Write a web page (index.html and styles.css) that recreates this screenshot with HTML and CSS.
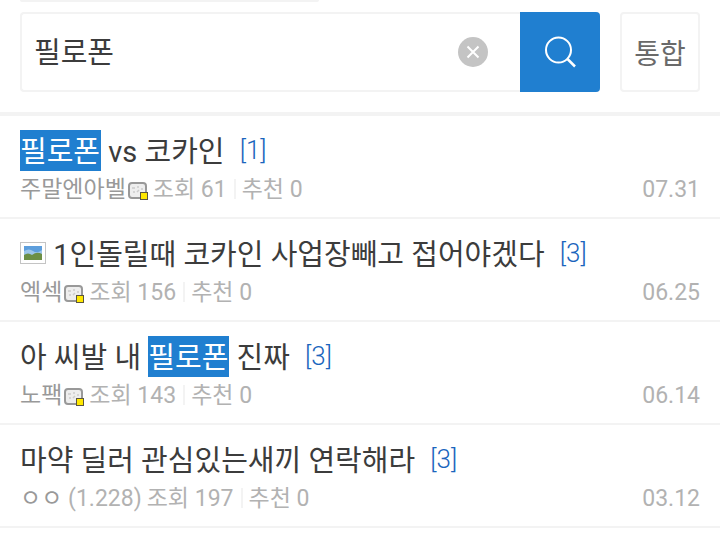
FILE: index.html
```html
<!DOCTYPE html>
<html lang="ko">
<head>
    <meta charset="UTF-8">
    <meta name="viewport" content="width=device-width, initial-scale=1.0">
    <title>필로폰</title>
    <link rel="stylesheet" href="styles.css">
</head>
<body>
    <!-- Shared icons -->
    <svg class="sprite" aria-hidden="true">
        <symbol id="nick" viewBox="0 0 20 18">
            <rect x="1" y="1" width="17" height="15" rx="3" fill="#eeeeee" stroke="#999999" stroke-width="2"/>
            <path d="M4 6h3M9 5h2M13 7h2M5 10h2M9 10l2-2" stroke="#cccccc" stroke-width="1.5" fill="none"/>
            <rect x="12.5" y="10.5" width="7" height="7" fill="#ffe800" stroke="#5c5640"/>
        </symbol>
    </svg>

    <header class="top">
        <div class="tab"></div>
        <form class="search">
            <div class="search-box">
                <input type="text" class="search-input" aria-label="검색어" value="필로폰">
                <button type="reset" class="clear" aria-label="지우기">
                    <svg width="30" height="30" viewBox="0 0 30 30">
                        <circle cx="15" cy="15" r="15" fill="#c4c4c4"/>
                        <path d="M9.5 9.5l11 11M20.5 9.5l-11 11" stroke="#ffffff" stroke-width="2"/>
                    </svg>
                </button>
                <button type="submit" class="submit" aria-label="검색">
                    <svg width="32" height="32" viewBox="0 0 32 32" fill="none" stroke="#ffffff" stroke-width="2">
                        <circle cx="14.5" cy="14" r="12.5"/>
                        <path d="M23 22.5l8 8" stroke-width="2.5"/>
                    </svg>
                </button>
            </div>
            <button type="button" class="scope">통합</button>
        </form>
    </header>

    <!-- Post list -->
    <ul class="list">
        <li class="post">
            <a href="#" class="title"><mark>필로폰</mark> vs 코카인 <span class="count">[1]</span></a>
            <div class="meta">
                <span>주말엔아벨</span><svg class="nick"><use href="#nick"/></svg>
                <span class="views">조회 61</span>
                <span class="likes">추천 0</span>
                <time class="date">07.31</time>
            </div>
        </li>
        <li class="post">
            <a href="#" class="title">
                <svg class="photo" viewBox="0 0 26 22">
                    <rect x="0.5" y="0.5" width="25" height="21" fill="#ffffff" stroke="#c4c4c4"/>
                    <rect x="4" y="4" width="18" height="14" fill="#5d9edc"/>
                    <path d="M4 9q5-3 9 0t9-1v5H4z" fill="#9dc6ea"/>
                    <path d="M4 13q4-3 8 0q5-4 10-1v6H4z" fill="#6c8f45"/>
                </svg>
                1인돌릴때 코카인 사업장빼고 접어야겠다 <span class="count">[3]</span></a>
            <div class="meta">
                <span>엑섹</span><svg class="nick"><use href="#nick"/></svg>
                <span class="views">조회 156</span>
                <span class="likes">추천 0</span>
                <time class="date">06.25</time>
            </div>
        </li>
        <li class="post">
            <a href="#" class="title">아 씨발 내 <mark>필로폰</mark> 진짜 <span class="count">[3]</span></a>
            <div class="meta">
                <span>노팩</span><svg class="nick"><use href="#nick"/></svg>
                <span class="views">조회 143</span>
                <span class="likes">추천 0</span>
                <time class="date">06.14</time>
            </div>
        </li>
        <li class="post">
            <a href="#" class="title">마약 딜러 관심있는새끼 연락해라 <span class="count">[3]</span></a>
            <div class="meta">
                <span>ㅇㅇ <span class="ip">(1.228)</span></span>
                <span class="views">조회 197</span>
                <span class="likes">추천 0</span>
                <time class="date">03.12</time>
            </div>
        </li>
    </ul>
</body>
</html>
```
FILE: styles.css
```css
* {
    box-sizing: border-box;
    margin: 0;
    padding: 0;
}

body {
    font-family: Roboto, 'Noto Sans CJK KR', sans-serif;
    background-color: #ffffff;
    color: #3c3c3c;
}

button, input {
    font-family: inherit;
    background: none;
    border: none;
}

button {
    cursor: pointer;
}

.sprite {
    display: none;
}

.top {
    padding: 0 20px 20px;
    border-bottom: 4px solid #f3f3f3;
}

.tab {
    width: 44%;
    height: 2px;
    margin-bottom: 10px;
    background-color: #f3f3f3;
    border-radius: 0 0 4px 4px;
}

.search {
    display: flex;
    gap: 20px;
}

.search-box {
    display: flex;
    flex: 1;
    align-items: center;
    height: 80px;
    border: 2px solid #f3f3f3;
    border-right: none;
    border-radius: 4px;
}

.search-input {
    flex: 1;
    min-width: 0;
    padding: 0 12px 4px;
    font-size: 29px;
    color: #3c3c3c;
    outline: none;
}

.clear, .submit {
    display: flex;
    align-items: center;
    justify-content: center;
}

.clear {
    margin-right: 32px;
}

.submit {
    width: 80px;
    height: 80px;
    background-color: #207fd0;
    border-radius: 0 4px 4px 0;
}

.scope {
    width: 80px;
    height: 80px;
    border: 2px solid #f3f3f3;
    border-radius: 4px;
    font-size: 28px;
    color: #6a6a6a;
}

.list {
    list-style: none;
}

.post {
    padding: 16px 20px 10px;
    border-bottom: 2px solid #f3f3f3;
}

.title {
    display: block;
    height: 41px;
    font-size: 29px;
    line-height: 41px;
    color: #3c3c3c;
    text-decoration: none;
}

.title mark {
    padding: 5px 1px 2px 0;
    line-height: 1;
    background-color: #207fd0;
    color: #ffffff;
}

.photo {
    width: 26px;
    height: 22px;
    vertical-align: 1px;
}

.count {
    margin-left: 8px;
    font-size: 26px;
    font-weight: 300;
    line-height: 1;
    vertical-align: 3px;
    color: #1a65bd;
}

.meta {
    display: flex;
    align-items: center;
    height: 34px;
    font-size: 23px;
    line-height: 34px;
    color: #999999;
}

.nick {
    width: 20px;
    height: 18px;
    margin-left: 2px;
    margin-top: 2px;
}

.ip, .views, .likes, .date {
    color: #b2b2b2;
}

.views {
    margin-left: 5px;
}

.likes::before {
    content: "";
    display: inline-block;
    width: 2px;
    height: 20px;
    margin: 0 6px 0 7px;
    vertical-align: -2px;
    background-color: #f3f3f3;
}

.date {
    margin-left: auto;
}
```
